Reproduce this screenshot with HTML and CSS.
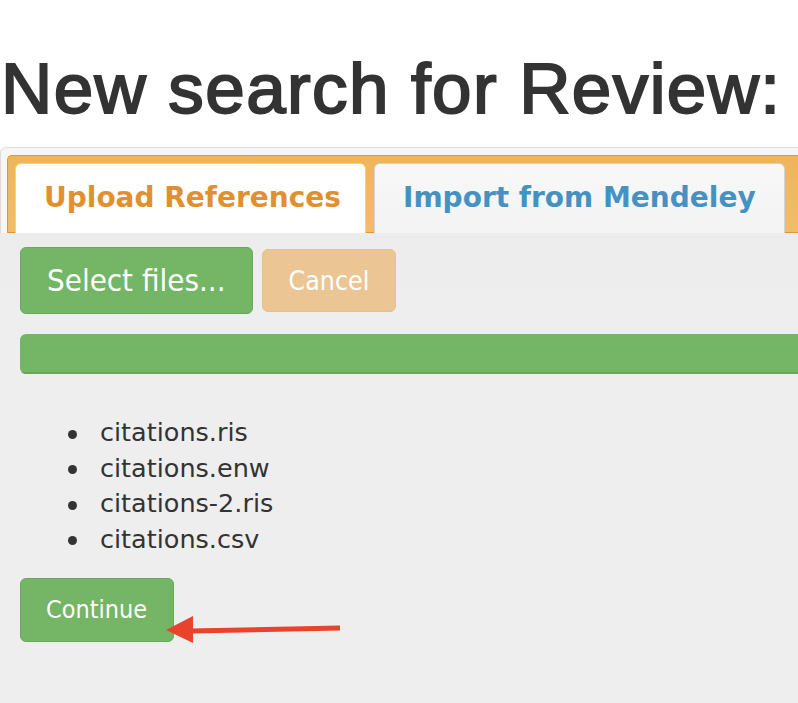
FILE: index.html
```html
<!DOCTYPE html>
<html lang="en">
<head>
  <meta charset="UTF-8">
  <title>New search | Review</title>
  <meta name="viewport" content="width=device-width, initial-scale=1.0">
  <link rel="stylesheet" href="styles.css">
</head>
<body>
  <h1 class="page-title">New search for Review:</h1>
  <div class="tabs">
    <ul class="tab-nav">
      <li class="tab active">Upload References</li>
      <li class="tab">Import from Mendeley</li>
    </ul>
    <div class="tab-panel">
      <div class="upload-bar">
        <button class="btn btn-green btn-select">Select files...</button>
        <button class="btn btn-cancel">Cancel</button>
      </div>
      <div class="progress"><div class="progress-fill" style="width: 100%"></div></div>
      <ul class="file-list">
        <li>citations.ris</li>
        <li>citations.enw</li>
        <li>citations-2.ris</li>
        <li>citations.csv</li>
      </ul>
      <div class="continue-row">
        <button class="btn btn-green btn-continue">Continue</button>
        <!-- annotation arrow -->
        <svg class="arrow" width="180" height="32" viewBox="0 0 180 32">
          <polygon points="0,16 27,2 27,29" fill="#e9442b"/>
          <line x1="24" y1="17" x2="174" y2="14" stroke="#e9442b" stroke-width="5"/>
        </svg>
      </div>
    </div>
  </div>
</body>
</html>
```

FILE: styles.css
```css
html, body { height: 100%; }
body {
  margin: 0; background: #fff; overflow: hidden;
  font-family: "DejaVu Sans", Verdana, sans-serif;
  display: flex; flex-direction: column;
}

.page-title {
  margin: 53px 0 23px 1px;
  font-family: "Liberation Sans", Arial, sans-serif;
  font-size: 71px; line-height: 71px; font-weight: normal;
  -webkit-text-stroke: 2px #333;
  color: #333; letter-spacing: 1.4px; white-space: nowrap;
}

.tabs {
  flex: 1; display: flex; flex-direction: column;
  border: 1px solid #ddd; border-right: none; border-bottom: none;
  border-radius: 6px 0 0 0;
  background: #f6f6f6;
  padding: 7px 0 0 6px;
}
.tab-nav {
  list-style: none; margin: 0; padding: 7px 7px 0 7px;
  display: flex; gap: 8px;
  background: linear-gradient(#eeb55b, #f0bd6c);
  border: 1px solid #e3953a; border-right: none; border-radius: 5px 0 0 0;
}
.tab {
  margin-bottom: -1px; white-space: nowrap;
  padding: 17px 28px 18px 28px;
  font-size: 28px; font-weight: bold; line-height: 33px;
  border: 1px solid #d3d3d3; border-bottom: none;
  border-radius: 6px 6px 0 0;
  background: linear-gradient(#f8f8f8, #f3f3f3);
  color: #4592c2;
}
.tab.active { background: #fff; border-color: #fbd850; color: #e1902f; padding: 17px 24px 19px 28px; }

.tab-panel {
  flex: 1; margin-left: -7px;
  background: linear-gradient(#ececec, #eeeeee 60px);
  padding: 14px 0 0 20px;
}
.upload-bar { display: flex; align-items: center; gap: 9px; }
.btn {
  font-family: "DejaVu Sans Condensed", Tahoma, sans-serif;
  color: #fff; border-radius: 6px; cursor: pointer;
}
.btn-green { background: #74b566; border: 1px solid #68aa5b; }
.btn-select { font-size: 31px; padding: 14px 26px 15px 26px; }
.btn-cancel {
  background: #ebc593; border: 1px solid #e8c08e;
  font-size: 26.5px; padding: 15px 26px 15px 26px;
}
.progress { margin-top: 20px; height: 40px; border-radius: 6px 0 0 6px; overflow: hidden; }
.progress-fill { height: 100%; background: #74b566; border-bottom: 2px solid #68a55b; box-sizing: border-box; }

.file-list {
  list-style: none; margin: 41px 0 0 0; padding-left: 80px;
  font-size: 25.5px; line-height: 35.5px; color: #333;
}
.file-list li::before {
  content: ""; display: inline-block;
  width: 9px; height: 9px; border-radius: 50%; background: #333;
  margin-left: -32px; margin-right: 23px; vertical-align: middle;
}

.continue-row { position: relative; display: flex; margin-top: 21px; }
.btn-continue { font-size: 25px; padding: 16px 26px 17px 25px; }
.arrow { position: absolute; left: 146px; top: 36px; }
```
